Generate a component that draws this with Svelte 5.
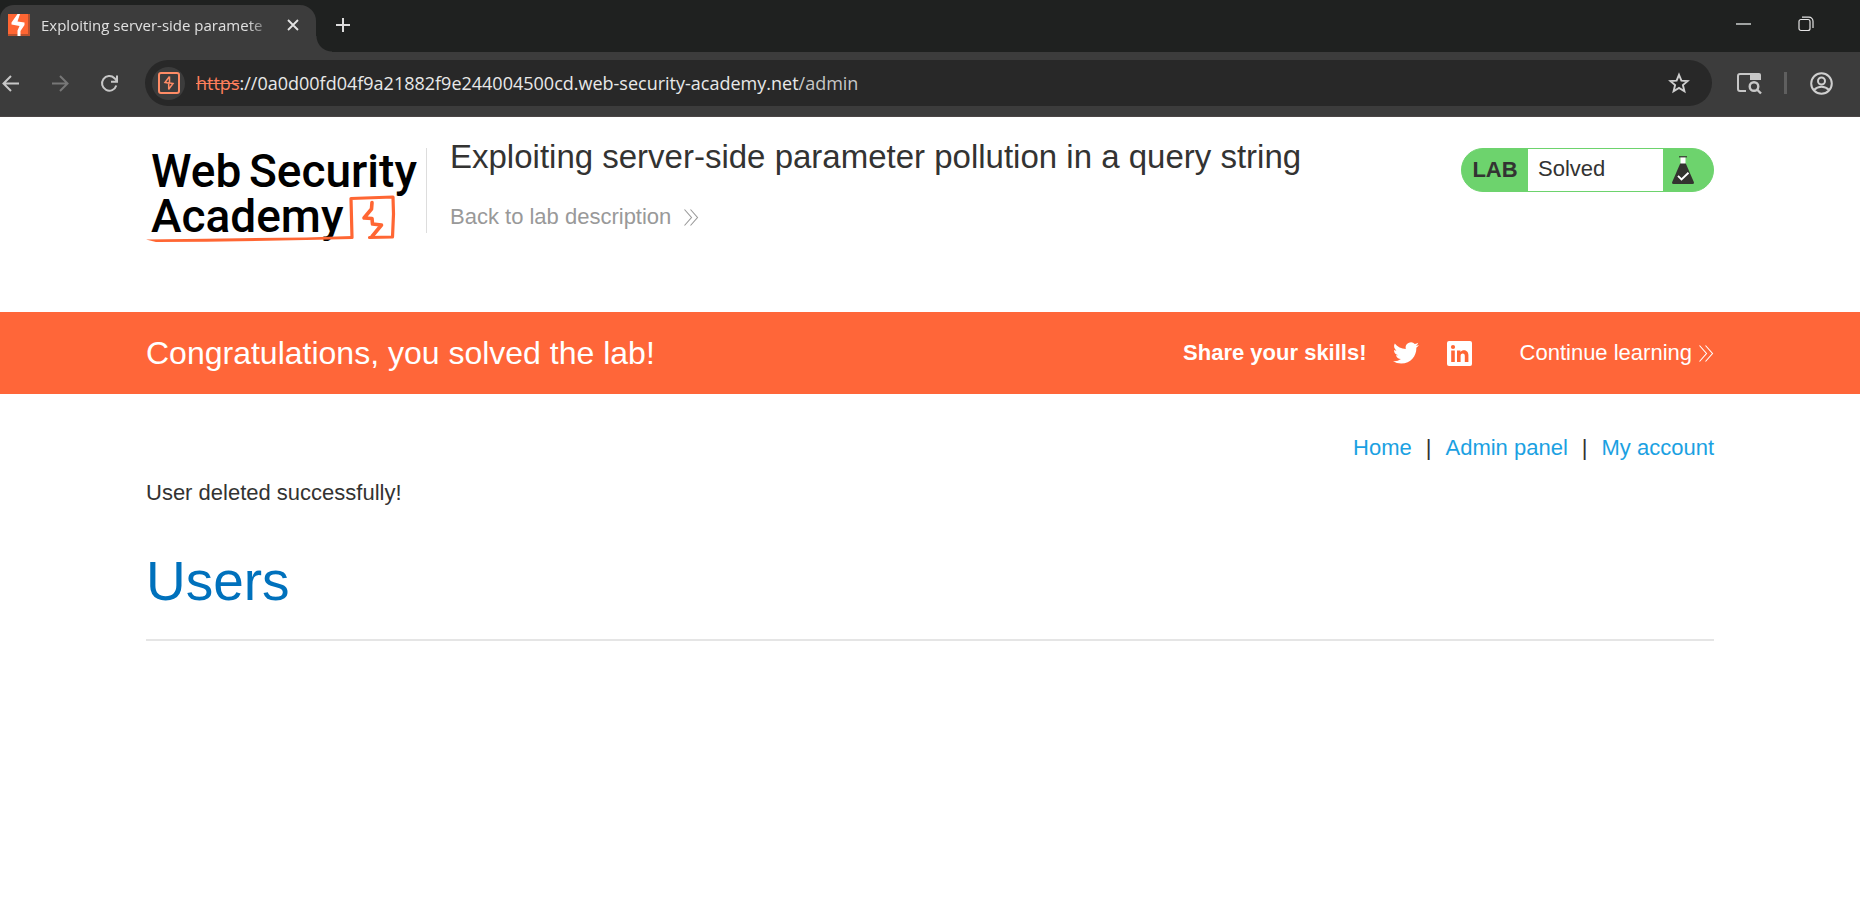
<script lang="ts">
  const links = ['Home', 'Admin panel', 'My account'];
</script>

{#snippet chevrons(w: number, h: number)}
  <svg width={w} height={h} viewBox="0 0 15 17" fill="none" stroke="currentColor" stroke-width="1.1" aria-hidden="true">
    <path d="M1 .5l7 8-7 8M7 .5l7 8-7 8" />
  </svg>
{/snippet}

<div class="browser">
  <div class="strip">
    <div class="tab">
      <svg width="22" height="22" viewBox="0 0 22 22" aria-hidden="true">
        <rect width="22" height="22" fill="#ff6633" />
        <path d="M20 0h2v22H0v-2h20z" fill="#b9522f" />
        <path d="M9.500 0H12L9.500 7.500l7 1v2.500L12.500 17v5H9.500v-5.500l2-4.500-8-1.500V8.500z" fill="#fff" />
      </svg>
      <span class="tab-title">Exploiting server-side paramete</span>
      <button class="plain" aria-label="Close tab">
        <svg width="12" height="12" viewBox="0 0 12 12" stroke="#e3e3e3" stroke-width="1.8"><path d="M1 1l10 10M11 1L1 11" /></svg>
      </button>
    </div>
    <button class="plain new-tab" aria-label="New tab">
      <svg width="14" height="14" viewBox="0 0 14 14" stroke="#dcdcdc" stroke-width="2"><path d="M7 0v14M0 7h14" /></svg>
    </button>
    <div class="window">
      <button class="plain" aria-label="Minimize">
        <svg width="16" height="16" viewBox="0 0 16 16" stroke="#a0a3a2" stroke-width="2"><path d="M0 8h15" /></svg>
      </button>
      <button class="plain" aria-label="Restore">
        <svg width="16" height="16" viewBox="0 0 16 16" fill="none" stroke="#e4e4e4" stroke-width="1.2">
          <rect x="1" y="3.500" width="11" height="11" rx="2" />
          <path d="M4 1.200h7a4 4 0 0 1 4 4V12" />
        </svg>
      </button>
    </div>
  </div>

  <div class="toolbar">
    <button class="plain" aria-label="Back">
      <svg width="18" height="18" viewBox="0 0 18 18" fill="none" stroke="#c7c7c7" stroke-width="2"><path d="M17 9.500H2M9 2L1.500 9.500 9 17" /></svg>
    </button>
    <button class="plain" aria-label="Forward">
      <svg width="18" height="18" viewBox="0 0 18 18" fill="none" stroke="#777" stroke-width="2"><path d="M1 9.500h15M9 2l7.500 7.500L9 17" /></svg>
    </button>
    <button class="plain" aria-label="Reload">
      <svg width="18" height="18" viewBox="0 0 18 18" fill="none" stroke="#c7c7c7" stroke-width="2"><path d="M16.300 11.500A7.300 7.300 0 1 1 14.500 4.200L17 7M17 1.500v6.200H11" /></svg>
    </button>
    <div class="address">
      <span class="site">
        <svg width="22" height="22" viewBox="0 0 22 22" fill="none" stroke="#ff8c66" stroke-width="2" aria-hidden="true">
          <rect x="1" y="1" width="20" height="20" rx="2" />
          <path d="M11.500 4.500L7 10.500l4.500.8M10.500 17.500l4.500-6-4.500-.8M11.500 4.500v6.500M10.700 11v6.500" stroke-width="1.500" />
        </svg>
      </span>
      <span class="url"><s>https</s>://0a0d00fd04f9a21882f9e244004500cd.web-security-academy.net<i>/admin</i></span>
      <button class="plain" aria-label="Bookmark this tab">
        <svg width="22" height="22" viewBox="0 0 22 22" fill="none" stroke="#cfcfcf" stroke-width="1.900"><path d="M11 2.800l2.400 5.800 6.200.5-4.700 4 1.500 6.100L11 15.900l-5.400 3.300 1.500-6.100-4.700-4 6.200-.5z" /></svg>
      </button>
    </div>
    <button class="plain lens" aria-label="Search tabs">
      <svg width="24" height="22" viewBox="0 0 24 22" fill="none" stroke="#c7c7c7" stroke-width="2">
        <path d="M9 19H3a2 2 0 0 1-2-2V4a2 2 0 0 1 2-2h18" />
        <path d="M13 1h9a2 2 0 0 1 2 2v5H13z" fill="#c7c7c7" stroke="none" />
        <circle cx="17" cy="14.500" r="4.300" stroke-width="2.400" />
        <path d="M20 17.500l4 4" stroke-width="2.400" />
      </svg>
    </button>
    <span class="bar"></span>
    <button class="plain" aria-label="Profile">
      <svg width="23" height="23" viewBox="0 0 23 23" fill="none" stroke="#cfcfcf" stroke-width="2">
        <circle cx="11.500" cy="11.500" r="10.300" /><circle cx="11.500" cy="9" r="3.500" /><path d="M4 18c4-4.500 11-4.500 15 0" />
      </svg>
    </button>
  </div>
</div>

<header class="wrap head">
  <a class="logo" href="#academy" aria-label="Web Security Academy">
    <svg width="280" height="96" viewBox="0 0 280 96">
      <g class="word">
        <text x="5" y="39">Web</text>
        <text x="103" y="39">Security</text>
        <text x="5" y="84">Academy</text>
      </g>
      <g fill="none" stroke="#ff6633" stroke-linejoin="round" stroke-linecap="round">
        <path d="M206 89.500L205 50.500l42-1.500.5 17-1 23-23 .5" stroke-width="3.200" />
        <path d="M226 54.500l-.5 6.500-7.500 9 8 .5.500 5.500 9 1-9.500 11.500" stroke-width="3.600" />
      </g>
      <path d="M0 91.500l60-.8 100-1.200 46-1.500v3l-46 1-100 1.800-50 .2z" fill="#ff6633" />
    </svg>
  </a>
  <div class="title">
    <h2>Exploiting server-side parameter pollution in a query string</h2>
    <a href="#lab">Back to lab description {@render chevrons(16, 17)}</a>
  </div>
  <div class="status">
    <span class="lab">LAB</span>
    <p>Solved</p>
    <span class="flask">
      <svg width="22" height="28" viewBox="0 0 22 28" aria-hidden="true">
        <path d="M8.500 1h5v7.500h-5z" fill="#fff" /><path d="M7 .8h8" stroke="#33332f" stroke-width="1.200" />
        <path d="M8.200 7.500h5.600L22 26.500q0 1.500-1.500 1.500h-19Q0 28 0 26.500z" fill="#33332f" />
        <path d="M6 19.800l3.500 3.700 7-6.700" fill="none" stroke="#fff" stroke-width="1.900" />
      </svg>
    </span>
  </div>
</header>

<section class="banner">
  <div class="wrap row">
    <h4>Congratulations, you solved the lab!</h4>
    <strong>Share your skills!</strong>
    <a class="tw" href="#twitter" aria-label="Twitter">
      <svg width="26" height="26" viewBox="0 0 24 24" fill="#fff"><path d="M23.950 4.570a10 10 0 0 1-2.820.77 4.960 4.960 0 0 0 2.160-2.720c-.95.550-2 .95-3.130 1.180a4.920 4.920 0 0 0-8.380 4.480C7.690 8.100 4.070 6.130 1.640 3.160a4.900 4.900 0 0 0 1.520 6.570 4.900 4.900 0 0 1-2.230-.61v.06a4.920 4.920 0 0 0 3.950 4.830 5 5 0 0 1-2.210.08 4.940 4.940 0 0 0 4.600 3.420A9.870 9.870 0 0 1 0 19.540a14 14 0 0 0 7.550 2.210c9.050 0 14-7.500 14-13.980l-.02-.64a9.900 9.900 0 0 0 2.420-2.560z" /></svg>
    </a>
    <a class="li" href="#linkedin" aria-label="LinkedIn">
      <svg width="25" height="25" viewBox="0 0 25 25"><rect width="25" height="25" rx="2" fill="#fff" />
        <g fill="#ff6633"><circle cx="6" cy="6" r="2.100" /><path d="M4.200 9.500h3.600V21H4.200zM10 9.500h3.400v1.600c1.800-3 8-2.700 8 2.900v7h-3.600v-6.200c0-3.400-4.200-3-4.200 0V21H10z" /></g>
      </svg>
    </a>
    <a class="next" href="#next">Continue learning {@render chevrons(16, 17)}</a>
  </div>
</section>

<main class="wrap">
  <nav>
    {#each links as link, i}
      {#if i}<span>|</span>{/if}
      <a href="#{link}">{link}</a>
    {/each}
  </nav>
  <p class="message">User deleted successfully!</p>
  <h1>Users</h1>
  <hr />
</main>

<style>
  :global(body) { margin: 0; background: #fff; color: #333332; font-family: "Liberation Sans", Arial, sans-serif; font-size: 22px; line-height: 26px; }
  a { color: inherit; text-decoration: none; }
  h1, h2, h4, p { margin: 0; font-weight: 400; }
  svg { display: block; flex: none; overflow: visible; }
  .plain { display: flex; align-items: center; justify-content: center; padding: 0; border: 0; background: none; flex: none; }

  .browser { background: #3c3c3c; font-family: "Open Sans", "Segoe UI", sans-serif; border-bottom: 1px solid #4a4545; }
  .strip { display: flex; align-items: stretch; height: 52px; background: #1f2120; }
  .tab { display: flex; align-items: center; width: 316px; margin-top: 5px; padding: 0 17px 8px 8px; box-sizing: border-box; gap: 11px; background: #3c3c3c; border-radius: 14px 16px 0 0; position: relative; }
  .tab::after { content: ""; position: absolute; left: 100%; bottom: 0; width: 16px; height: 16px; background: radial-gradient(circle at 100% 0, transparent 15px, #3c3c3c 16px); }
  .tab-title { flex: 1; white-space: nowrap; font-size: 15px; color: #e0e0e0; mask-image: linear-gradient(90deg, #000 90%, transparent 102%); }
  .tab .plain { margin-left: 6px; }
  .new-tab { width: 54px; padding-bottom: 2px; }
  .window { display: flex; gap: 46px; margin-left: auto; padding: 0 46px 4px 0; }
  .toolbar { display: flex; align-items: center; height: 46px; padding: 8px 27px 10px 2px; gap: 31px; }
  .address { display: flex; align-items: center; flex: 1; height: 46px; padding: 0 22px 0 7px; margin-left: -4px; box-sizing: border-box; border-radius: 23px; background: #282828; }
  .site { display: flex; align-items: center; justify-content: center; width: 33px; height: 33px; border-radius: 50%; background: #3c3c3c; }
  .url { flex: 1; margin-left: 11px; font-size: 18px; color: #e8e8e8; white-space: nowrap; }
  .url s { color: #ff7f5c; }
  .url i { font-style: normal; color: #c7c7c7; }
  .lens { margin-left: -6px; }
  .bar { width: 3px; height: 22px; margin: 0 -8px; background: #5f5f5f; }

  .wrap { box-sizing: border-box; width: calc(100% - 292px); margin: 0 auto; }
  .head { display: flex; align-items: flex-start; padding: 31px 0 79px; }
  .logo { display: block; border-right: 1px solid #ddd; height: 85px; }
  .word { font-family: Roboto, sans-serif; font-weight: 500; font-size: 46px; fill: #000; }
  .title { flex: 1; padding-left: 23px; }
  h2 { font-size: 33px; line-height: 38px; margin-top: -10px; }
  .title a { display: inline-flex; align-items: center; gap: 12px; margin-top: 28px; color: #999; }
  .status { display: flex; box-sizing: border-box; width: 253px; height: 44px; border: 1px solid #6dd36d; border-radius: 22px; background: #6dd36d; line-height: 42px; }
  .lab { width: 66px; text-align: center; font-weight: 700; }
  .status p { flex: 1; padding-left: 10px; background: #fff; line-height: 40px; }
  .flask { display: flex; align-items: center; width: 50px; padding-left: 9px; box-sizing: border-box; }

  .banner { background: #ff6639; color: #fff; }
  .row { display: flex; align-items: center; height: 82px; }
  h4 { flex: 1; font-size: 32px; line-height: 36px; }
  .tw { margin-left: 26px; }
  .li { margin-left: 28px; }
  .next { display: flex; align-items: center; gap: 6px; margin-left: 48px; }

  nav { display: flex; justify-content: flex-end; gap: 14px; padding-top: 41px; color: #333332; }
  nav a { color: #1ba1e2; }
  .message { margin-top: 19px; }
  h1 { margin-top: 43px; font-size: 55px; line-height: 64px; color: #0071bc; }
  hr { margin: 26px 0 0; border: 0; height: 2px; background: #e5e5e5; }
</style>
